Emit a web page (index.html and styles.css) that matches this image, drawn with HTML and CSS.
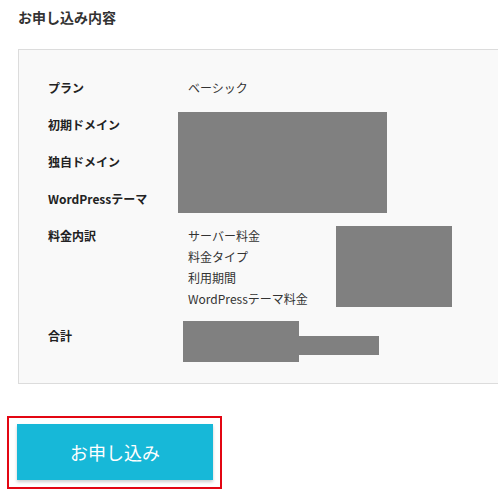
FILE: index.html
```html
<!DOCTYPE html>
<html lang="ja">
<head>
<meta charset="utf-8">
<title>お申し込み内容</title>
<link rel="stylesheet" href="styles.css">
</head>
<body>
<div class="page">
  <h2 class="title">お申し込み内容</h2>
  <div class="panel">
    <div class="rows">
      <div class="row"><div class="label">プラン</div><div class="value">ベーシック</div></div>
      <div class="row"><div class="label">初期ドメイン</div><div class="value"></div></div>
      <div class="row"><div class="label">独自ドメイン</div><div class="value"></div></div>
      <div class="row"><div class="label">WordPressテーマ</div><div class="value"></div></div>
      <div class="row"><div class="label">料金内訳</div>
        <div class="value">
          <div>サーバー料金</div>
          <div>料金タイプ</div>
          <div>利用期間</div>
          <div>WordPressテーマ料金</div>
        </div>
      </div>
      <div class="row"><div class="label">合計</div><div class="value"></div></div>
    </div>
    <div class="redact r1"></div>
    <div class="redact r2"></div>
    <div class="redact r3"></div>
    <div class="redact r4"></div>
  </div>
  <div class="actions">
    <div class="highlight">
      <button class="submit" type="button">お申し込み</button>
    </div>
  </div>
</div>
</body>
</html>
```

FILE: styles.css
```css
html, body {
  margin: 0;
  padding: 0;
  background: #fff;
}
body {
  font-family: "Noto Sans CJK JP", "Noto Sans", sans-serif;
  color: #333;
  overflow: hidden;
}
.page {
  padding-top: 7px;
}
.title {
  margin: 0 0 0 18px;
  font-size: 14px;
  line-height: 20px;
  font-weight: 700;
  color: #333;
}
.panel {
  position: relative;
  margin: 22px -20px 0 18px;
  background: #f9f9f9;
  border: 1px solid #dcdcdc;
  padding: 27px 0 37px 29px;
}
.rows {
  display: flex;
  flex-direction: column;
  gap: 16px;
}
.row {
  display: grid;
  grid-template-columns: 140px 1fr;
  font-size: 12px;
  line-height: 21px;
  min-height: 21px;
}
.label {
  font-weight: 700;
  color: #222;
}
.value {
  color: #333;
}
.redact {
  position: absolute;
  background: #808080;
}
.r1 { left: 159px; top: 62px; width: 209px; height: 101px; }
.r2 { left: 317px; top: 176px; width: 116px; height: 81px; }
.r3 { left: 164px; top: 271px; width: 116px; height: 41px; }
.r4 { left: 280px; top: 286px; width: 80px; height: 19px; }
.actions {
  margin-top: 32px;
  padding-left: 7px;
}
.highlight {
  display: inline-block;
  border: 2px solid #e30613;
  padding: 6px 7px 7px 8px;
}
.submit {
  display: block;
  width: 196px;
  height: 56px;
  border: 0;
  margin: 0;
  background: #17b8d8;
  color: #fff;
  font-family: "Noto Sans CJK JP", "Noto Sans", sans-serif;
  font-size: 18px;
  box-shadow: 0 2px 3px rgba(0, 0, 0, 0.2);
  cursor: pointer;
}
```
